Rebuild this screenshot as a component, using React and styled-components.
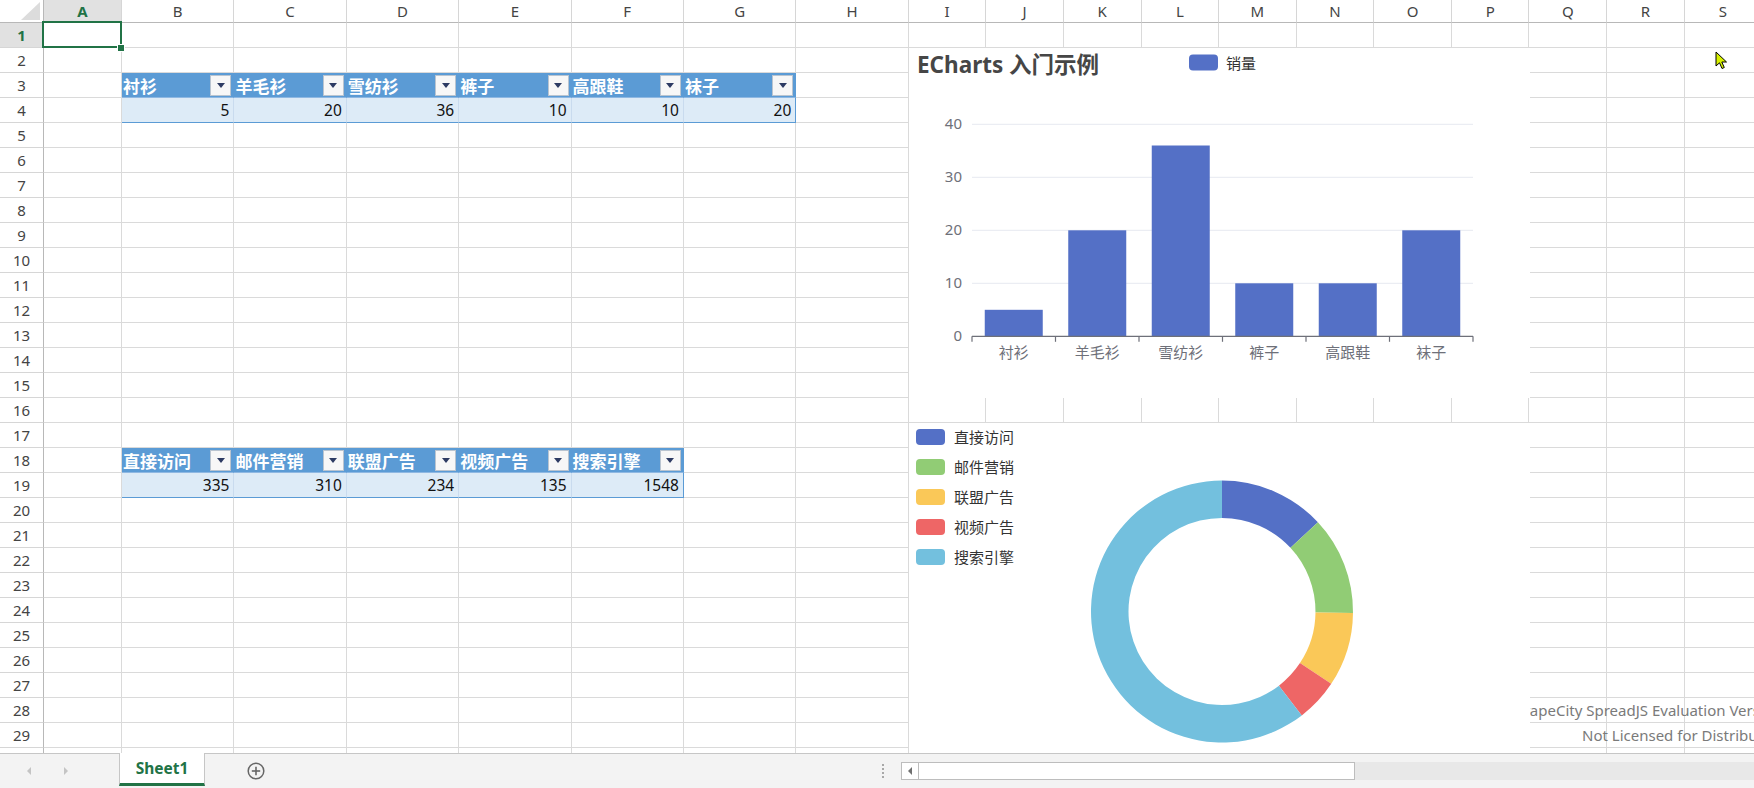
import React from 'react';
import styled, { createGlobalStyle, css } from 'styled-components';

const FONT = `"Noto Sans", "Noto Sans CJK SC", sans-serif`;

const GlobalStyle = createGlobalStyle`
  html, body { margin: 0; padding: 0; width: 100%; height: 100%; overflow: hidden; background: #fff; }
  #root { width: 100%; height: 100%; }
  *, *::before, *::after { box-sizing: border-box; }
`;

const COL_WIDTHS = [78, ...Array(7).fill(112.4), ...Array(11).fill(77.6)];
const LETTERS = 'ABCDEFGHIJKLMNOPQRS'.split('');
const N_ROWS = 30;

const Page = styled.div`
  display: flex;
  flex-direction: column;
  width: 100vw;
  height: 100vh;
  font-family: ${FONT};
`;

const SheetArea = styled.div`
  position: relative;
  flex: 1;
  overflow: hidden;
`;

const Grid = styled.div`
  display: grid;
  grid-template-columns: 44px ${COL_WIDTHS.map((w) => `${w}px`).join(' ')};
  grid-template-rows: 23px repeat(${N_ROWS}, 25px);
`;

const Corner = styled.div`
  position: relative;
  background: #fff;
  border-right: 1px solid #b8b8b8;
  border-bottom: 1px solid #b8b8b8;
  &::after {
    content: '';
    position: absolute;
    right: 3px;
    bottom: 2px;
    width: 0;
    height: 0;
    border-left: 19px solid transparent;
    border-bottom: 18px solid #dcdcdc;
  }
`;

const ColHead = styled.div`
  display: flex;
  align-items: center;
  justify-content: center;
  font-size: 15px;
  color: ${(p) => (p.$active ? '#217346' : '#444')};
  font-weight: ${(p) => (p.$active ? 700 : 400)};
  background: ${(p) => (p.$active ? '#e1e1e1' : '#fff')};
  border-right: 1px solid #d6d6d6;
  border-bottom: 1px solid #b8b8b8;
  overflow: hidden;
`;

const RowHead = styled(ColHead)`
  border-right: 1px solid #b8b8b8;
  border-bottom: 1px solid #d6d6d6;
`;

const Cell = styled.div`
  position: relative;
  display: flex;
  align-items: center;
  min-width: 0;
  white-space: nowrap;
  font-size: 15.5px;
  color: #111;
  border-right: 1px solid #dadada;
  border-bottom: 1px solid #dadada;

  ${(p) =>
    p.$kind === 'th' &&
    css`
      background: #5b9bd5;
      color: #fff;
      font-weight: 700;
      font-size: 17px;
      justify-content: space-between;
      padding: 0 2px 0 1px;
      border-right-color: #5b9bd5;
      border-bottom-color: #8fb8e2;
    `}

  ${(p) =>
    p.$kind === 'td' &&
    css`
      background: #ddebf7;
      justify-content: flex-end;
      padding-right: 4px;
      border-right-color: ${p.$last ? '#5b9bd5' : '#c9dbee'};
      border-bottom-color: #5b9bd5;
    `}

  ${(p) =>
    p.$selected &&
    css`
      z-index: 3;
      &::before {
        content: '';
        position: absolute;
        left: -2px;
        top: -2px;
        right: -1px;
        bottom: -1px;
        border: 2px solid #217346;
      }
      &::after {
        content: '';
        position: absolute;
        right: -3px;
        bottom: -4px;
        width: 6px;
        height: 6px;
        background: #217346;
        outline: 1px solid #fff;
      }
    `}
`;

const FilterButton = styled.span`
  flex: none;
  width: 21px;
  height: 21px;
  display: flex;
  align-items: center;
  justify-content: center;
  background: #f7f7f7;
  border: 1px solid #b9c4d0;
  &::after {
    content: '';
    width: 0;
    height: 0;
    border-left: 4.5px solid transparent;
    border-right: 4.5px solid transparent;
    border-top: 5px solid #2d3b63;
    margin-top: 1px;
  }
`;

const ChartBox = styled.div`
  position: absolute;
  left: ${(p) => p.$left}px;
  top: ${(p) => p.$top}px;
  width: ${(p) => p.$w}px;
  height: ${(p) => p.$h}px;
  background: #fff;
  z-index: 2;
  overflow: hidden;
  font-family: ${FONT};
  svg {
    display: block;
  }
`;

const Watermark = styled.div`
  position: absolute;
  left: 1513px;
  top: 698px;
  z-index: 1;
  font-size: 15px;
  color: #7a7a7a;
  line-height: 25px;
  white-space: nowrap;
`;

const WatermarkLine = styled.div`
  padding-left: ${(p) => p.$indent || 0}px;
`;

const Cursor = styled.svg`
  position: absolute;
  left: 1715px;
  top: 51px;
  z-index: 5;
`;

/* ---------- bottom bar ---------- */
const TabBar = styled.div`
  flex: none;
  height: 35px;
  display: flex;
  align-items: center;
  background: #f3f3f3;
  border-top: 1px solid #c6c6c6;
`;

const TabStrip = styled.div`
  flex: none;
  width: 876px;
  height: 100%;
  display: flex;
  align-items: center;
`;

const NavButtons = styled.div`
  flex: none;
  width: 119px;
  display: flex;
  align-items: center;
  padding-left: 27px;
  gap: 33px;
`;

const NavArrow = styled.span`
  width: 0;
  height: 0;
  border-top: 4px solid transparent;
  border-bottom: 4px solid transparent;
  ${(p) => (p.$dir === 'left' ? 'border-right: 4px solid #c4c4c4;' : 'border-left: 4px solid #c4c4c4;')}
`;

const SheetTab = styled.div`
  flex: none;
  align-self: flex-start;
  margin-top: -1px;
  width: 86px;
  height: 33px;
  display: flex;
  align-items: center;
  justify-content: center;
  background: #fff;
  border-left: 1px solid #c6c6c6;
  border-right: 1px solid #c6c6c6;
  border-bottom: 3px solid #217346;
  color: #217346;
  font-weight: 700;
  font-size: 15.5px;
`;

const AddButton = styled.span`
  flex: none;
  margin-left: 42px;
  width: 18px;
  height: 18px;
  display: flex;
`;

const Splitter = styled.div`
  flex: none;
  width: 25px;
  display: flex;
  padding-left: 6px;
  &::before {
    content: '';
    width: 2px;
    height: 14px;
    border-left: 2px dotted #a8a8a8;
  }
`;

const HScroll = styled.div`
  flex: 1;
  height: 18px;
  display: flex;
`;

const ScrollArrow = styled.div`
  flex: none;
  width: 18px;
  height: 100%;
  background: #fff;
  border: 1px solid #bdbdbd;
  display: flex;
  align-items: center;
  justify-content: center;
  &::after {
    content: '';
    width: 0;
    height: 0;
    border-top: 4px solid transparent;
    border-bottom: 4px solid transparent;
    border-right: 4px solid #707070;
  }
`;

const ScrollThumb = styled.div`
  flex: none;
  width: 436px;
  height: 100%;
  background: #fff;
  border: 1px solid #bdbdbd;
  border-left: none;
`;

const ScrollTrack = styled.div`
  flex: 1;
  height: 100%;
  background: #e8e8e8;
`;

/* ---------- data ---------- */
const CELLS = {
  '3': { kind: 'th', start: 1, values: ['衬衫', '羊毛衫', '雪纺衫', '裤子', '高跟鞋', '袜子'] },
  '4': { kind: 'td', start: 1, values: [5, 20, 36, 10, 10, 20] },
  '18': { kind: 'th', start: 1, values: ['直接访问', '邮件营销', '联盟广告', '视频广告', '搜索引擎'] },
  '19': { kind: 'td', start: 1, values: [335, 310, 234, 135, 1548] },
};

const BAR_CATS = ['衬衫', '羊毛衫', '雪纺衫', '裤子', '高跟鞋', '袜子'];
const BAR_VALS = [5, 20, 36, 10, 10, 20];

const PIE = [
  ['直接访问', 335, '#5470c6'],
  ['邮件营销', 310, '#91cc75'],
  ['联盟广告', 234, '#fac858'],
  ['视频广告', 135, '#ee6666'],
  ['搜索引擎', 1548, '#73c0de'],
];

function BarChart() {
  const X0 = 63;
  const X1 = 564;
  const Y0 = 288.3;
  const UNIT = 5.3;
  const CW = (X1 - X0) / 6;
  return (
    <svg width="621" height="350" viewBox="0 0 621 350">
      <text x="8" y="16" fontSize="22.5" fontWeight="700" fill="#464646" dominantBaseline="central">
        ECharts 入门示例
      </text>
      <rect x="280" y="6.5" width="29" height="16" rx="4" fill="#5470c6" />
      <text x="317" y="14.5" fontSize="15" fill="#333" dominantBaseline="central">
        销量
      </text>
      {[10, 20, 30, 40].map((v) => (
        <line key={v} x1={X0} x2={X1} y1={Y0 - v * UNIT} y2={Y0 - v * UNIT} stroke="#e6e9f0" strokeWidth="1" />
      ))}
      {[0, 10, 20, 30, 40].map((v) => (
        <text key={v} x="53" y={Y0 - v * UNIT - 1.5} fontSize="15" fill="#6e7079" textAnchor="end" dominantBaseline="central">
          {v}
        </text>
      ))}
      {BAR_VALS.map((v, i) => {
        const cx = X0 + CW * (i + 0.5);
        return <rect key={i} x={cx - 29} y={Y0 - v * UNIT} width="58" height={v * UNIT} fill="#5470c6" />;
      })}
      <line x1={X0} x2={X1} y1={Y0} y2={Y0} stroke="#6e7079" strokeWidth="1.2" />
      {Array.from({ length: 7 }).map((_, i) => (
        <line key={i} x1={X0 + CW * i} x2={X0 + CW * i} y1={Y0} y2={Y0 + 5.5} stroke="#6e7079" strokeWidth="1.2" />
      ))}
      {BAR_CATS.map((c, i) => (
        <text key={c} x={X0 + CW * (i + 0.5)} y="304" fontSize="15" fill="#6e7079" textAnchor="middle" dominantBaseline="central">
          {c}
        </text>
      ))}
    </svg>
  );
}

function arcPath(cx, cy, R, r, a0, a1) {
  const pt = (rad, a) => [cx + rad * Math.sin(a), cy - rad * Math.cos(a)];
  const large = a1 - a0 > Math.PI ? 1 : 0;
  const [ox0, oy0] = pt(R, a0);
  const [ox1, oy1] = pt(R, a1);
  const [ix1, iy1] = pt(r, a1);
  const [ix0, iy0] = pt(r, a0);
  return `M${ox0} ${oy0} A${R} ${R} 0 ${large} 1 ${ox1} ${oy1} L${ix1} ${iy1} A${r} ${r} 0 ${large} 0 ${ix0} ${iy0} Z`;
}

function DonutChart() {
  const total = PIE.reduce((s, d) => s + d[1], 0);
  const cx = 313;
  const cy = 188.5;
  let acc = 0;
  return (
    <svg width="621" height="375" viewBox="0 0 621 375">
      {PIE.map(([name, , color], i) => (
        <g key={name}>
          <rect x="7" y={6 + i * 30} width="29" height="16" rx="4" fill={color} />
          <text x="45" y={14 + i * 30} fontSize="15" fill="#333" dominantBaseline="central">
            {name}
          </text>
        </g>
      ))}
      {PIE.map(([name, v, color]) => {
        const a0 = (acc / total) * Math.PI * 2;
        acc += v;
        const a1 = (acc / total) * Math.PI * 2;
        return <path key={name} d={arcPath(cx, cy, 131, 93.5, a0, a1)} fill={color} />;
      })}
    </svg>
  );
}

function SheetGrid() {
  const items = [<Corner key="corner" />];
  LETTERS.forEach((l, i) => {
    items.push(
      <ColHead key={`h${l}`} $active={i === 0}>
        {l}
      </ColHead>
    );
  });
  for (let r = 1; r <= N_ROWS; r++) {
    items.push(
      <RowHead key={`r${r}`} $active={r === 1}>
        {r}
      </RowHead>
    );
    const def = CELLS[String(r)];
    LETTERS.forEach((l, c) => {
      let content = null;
      let kind;
      let last = false;
      if (def && c >= def.start && c < def.start + def.values.length) {
        kind = def.kind;
        last = c === def.start + def.values.length - 1;
        const v = def.values[c - def.start];
        content =
          kind === 'th' ? (
            <>
              <span>{v}</span>
              <FilterButton />
            </>
          ) : (
            v
          );
      }
      items.push(
        <Cell key={`${l}${r}`} $kind={kind} $last={last} $selected={r === 1 && c === 0}>
          {content}
        </Cell>
      );
    });
  }
  return <Grid>{items}</Grid>;
}

export default function App() {
  return (
    <Page>
      <GlobalStyle />
      <SheetArea>
        <SheetGrid />
        <Watermark>
          <WatermarkLine>GrapeCity SpreadJS Evaluation Version</WatermarkLine>
          <WatermarkLine $indent={69}>Not Licensed for Distribution</WatermarkLine>
        </Watermark>
        <ChartBox $left={909} $top={48} $w={621} $h={350}>
          <BarChart />
        </ChartBox>
        <ChartBox $left={909} $top={423} $w={621} $h={375}>
          <DonutChart />
        </ChartBox>
        <Cursor width="14" height="19" viewBox="0 0 14 19">
          <path d="M1 1 L1 15 L4.5 11.8 L7 17.5 L9.3 16.5 L6.8 11 L11.5 11 Z" fill="#d7f000" stroke="#000" strokeWidth="1" strokeLinejoin="round" />
        </Cursor>
      </SheetArea>
      <TabBar>
        <TabStrip>
          <NavButtons>
            <NavArrow $dir="left" />
            <NavArrow $dir="right" />
          </NavButtons>
          <SheetTab>Sheet1</SheetTab>
          <AddButton>
            <svg width="18" height="18" viewBox="0 0 18 18">
              <circle cx="9" cy="9" r="7.8" fill="none" stroke="#666" strokeWidth="1.5" />
              <line x1="9" y1="4.8" x2="9" y2="13.2" stroke="#666" strokeWidth="1.6" />
              <line x1="4.8" y1="9" x2="13.2" y2="9" stroke="#666" strokeWidth="1.6" />
            </svg>
          </AddButton>
        </TabStrip>
        <Splitter />
        <HScroll>
          <ScrollArrow />
          <ScrollThumb />
          <ScrollTrack />
        </HScroll>
      </TabBar>
    </Page>
  );
}
